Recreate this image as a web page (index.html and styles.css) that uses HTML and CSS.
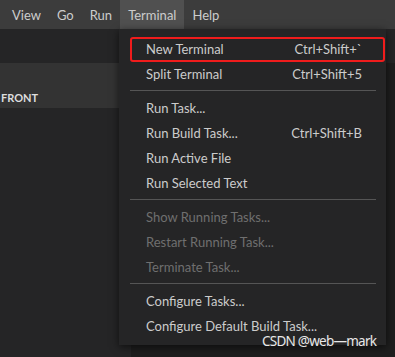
FILE: index.html
```html
<!DOCTYPE html>
<html lang="en">
<head>
  <meta charset="UTF-8" />
  <title>Terminal menu</title>
  <meta name="viewport" content="width=device-width, initial-scale=1.0" />
  <link rel="stylesheet" href="styles.css">
</head>
<body>

  <!-- Menu bar -->
  <div class="menubar">
    <span class="menubar-item">View</span>
    <span class="menubar-item">Go</span>
    <span class="menubar-item">Run</span>
    <span class="menubar-item active">Terminal</span>
    <span class="menubar-item">Help</span>
  </div>

  <div class="workbench">
    <div class="sidebar">
      <div class="sidebar-title"></div>
      <div class="section-header"><span>FRONT</span></div>
    </div>
    <div class="editor">
      <div class="tabs"></div>
    </div>

    <!-- Terminal dropdown -->
    <div class="dropdown">
      <div class="menu-row marked"><span>New Terminal</span><span class="keys">Ctrl+Shift+`</span></div>
      <div class="menu-row"><span>Split Terminal</span><span class="keys">Ctrl+Shift+5</span></div>
      <div class="menu-sep"></div>
      <div class="menu-row"><span>Run Task...</span></div>
      <div class="menu-row"><span>Run Build Task...</span><span class="keys">Ctrl+Shift+B</span></div>
      <div class="menu-row"><span>Run Active File</span></div>
      <div class="menu-row"><span>Run Selected Text</span></div>
      <div class="menu-sep"></div>
      <div class="menu-row disabled"><span>Show Running Tasks...</span></div>
      <div class="menu-row disabled"><span>Restart Running Task...</span></div>
      <div class="menu-row disabled"><span>Terminate Task...</span></div>
      <div class="menu-sep"></div>
      <div class="menu-row"><span>Configure Tasks...</span></div>
      <div class="menu-row"><span>Configure Default Build Task...</span></div>
    </div>

    <div class="watermark">CSDN @web—mark</div>
  </div>

</body>
</html>
```

FILE: styles.css
```css
:root {
  --bar: #3c3c3c;
  --side: #252526;
  --editor: #1e1e1e;
  --text: #cccccc;
  --dim: #6f6f6f;
}

html, body {
  margin: 0;
  height: 100%;
}

body {
  font-family: Lato, "Noto Sans", sans-serif;
  font-size: 13px;
  background-color: var(--editor);
  color: var(--text);
  display: flex;
  flex-direction: column;
  overflow: hidden;
}

.menubar {
  height: 29px;
  flex: none;
  background-color: var(--bar);
  display: flex;
  align-items: stretch;
  padding-left: 4px;
}

.menubar-item {
  display: flex;
  align-items: center;
  padding: 0 8px;
}

.menubar-item.active {
  background-color: #505050;
}

.workbench {
  flex: 1;
  display: flex;
  position: relative;
}

.sidebar {
  width: 131px;
  flex: none;
  background-color: var(--side);
}

.sidebar-title {
  height: 34px;
}

.section-header {
  height: 45px;
  background-color: #333333;
  display: flex;
  align-items: flex-end;
  padding: 0 0 4px 1px;
  box-sizing: border-box;
  font-size: 11px;
  font-weight: bold;
  color: #dddddd;
}

.editor {
  flex: 1;
}

.tabs {
  height: 34px;
  background-color: var(--side);
}

.dropdown {
  position: absolute;
  top: 0;
  left: 119px;
  width: 267px;
  padding: 7px 0;
  background-color: var(--side);
  box-shadow: 0 2px 8px rgba(0, 0, 0, 0.6);
}

.menu-row {
  height: 25px;
  display: flex;
  align-items: center;
  justify-content: space-between;
  padding: 0 24px 0 27px;
  white-space: nowrap;
}

.menu-row.disabled {
  color: var(--dim);
}

.menu-row.marked {
  position: relative;
}

.menu-row.marked::after {
  content: "";
  position: absolute;
  left: 11px;
  right: 1px;
  top: 1px;
  bottom: -1px;
  border: 2px solid #f01c1c;
  border-radius: 3px;
}

.menu-sep {
  height: 1px;
  margin: 4px 10px 4px 11px;
  background-color: #555555;
}

.watermark {
  position: absolute;
  left: 262px;
  bottom: 7px;
  font-family: "Noto Sans", sans-serif;
  font-size: 13.5px;
  letter-spacing: -0.75px;
  color: #e8e8e8;
  white-space: nowrap;
}
```
